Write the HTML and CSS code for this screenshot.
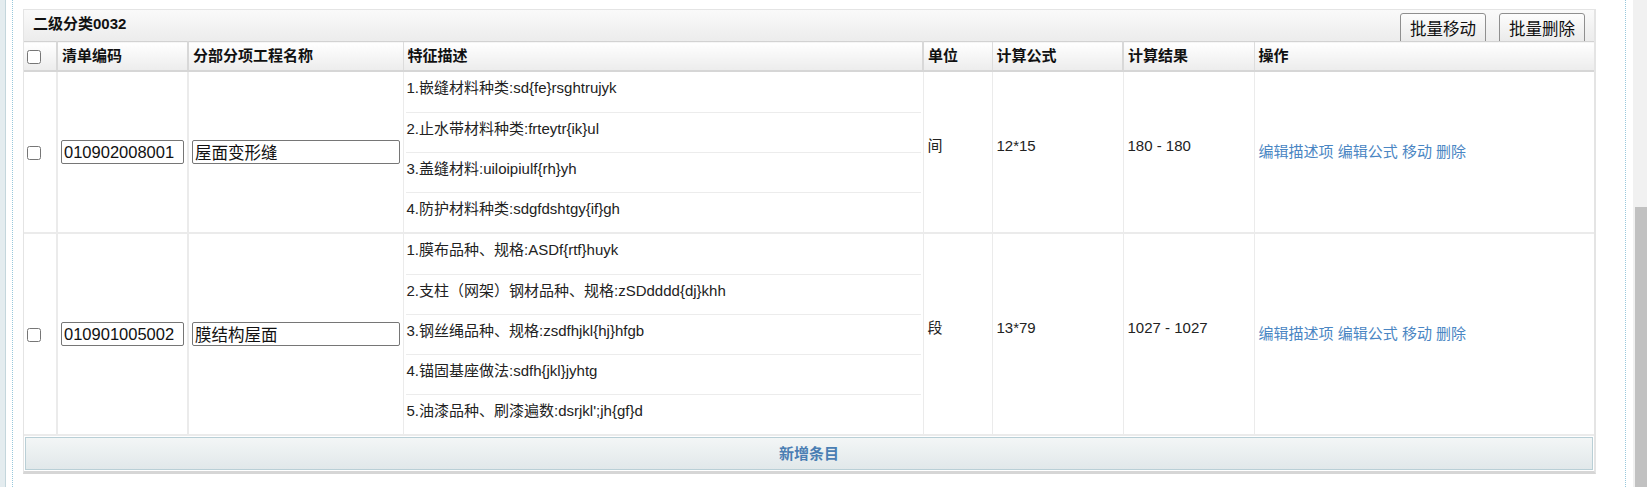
FILE: index.html
```html
<!DOCTYPE html>
<html lang="zh-CN">
<head>
<meta charset="utf-8">
<title>二级分类0032</title>
<link rel="stylesheet" href="styles.css">
</head>
<body>
<div class="page">
  <div class="leftbar"></div>
  <div class="frame">
    <div class="panel">
      <div class="titlebar">
        <span class="title">二级分类0032</span>
        <div class="actions">
          <button class="btn" type="button">批量移动</button>
          <button class="btn" type="button">批量删除</button>
        </div>
      </div>
      <table class="grid">
        <colgroup>
          <col class="c-check">
          <col class="c-code">
          <col class="c-name">
          <col class="c-desc">
          <col class="c-unit">
          <col class="c-formula">
          <col class="c-result">
          <col class="c-ops">
        </colgroup>
        <thead>
          <tr>
            <th class="th-check"><input type="checkbox" class="chk"></th>
            <th class="th-sep">清单编码</th>
            <th class="th-sep">分部分项工程名称</th>
            <th>特征描述</th>
            <th class="th-sep">单位</th>
            <th>计算公式</th>
            <th class="th-sep">计算结果</th>
            <th>操作</th>
          </tr>
        </thead>
        <tbody>
          <tr>
            <td class="td-check"><input type="checkbox" class="chk"></td>
            <td class="td-input"><input class="field field-code" type="text" value="010902008001"></td>
            <td class="td-input"><input class="field field-name" type="text" value="屋面变形缝"></td>
            <td class="td-desc">
              <div class="desc-line">1.嵌缝材料种类:sd{fe}rsghtrujyk</div>
              <div class="desc-line">2.止水带材料种类:frteytr{ik}ul</div>
              <div class="desc-line">3.盖缝材料:uiloipiulf{rh}yh</div>
              <div class="desc-line">4.防护材料种类:sdgfdshtgy{if}gh</div>
            </td>
            <td class="td-text">间</td>
            <td class="td-text">12*15</td>
            <td class="td-text">180 - 180</td>
            <td class="td-ops"><a href="#">编辑描述项</a> <a href="#">编辑公式</a> <a href="#">移动</a> <a href="#">删除</a></td>
          </tr>
          <tr>
            <td class="td-check"><input type="checkbox" class="chk"></td>
            <td class="td-input"><input class="field field-code" type="text" value="010901005002"></td>
            <td class="td-input"><input class="field field-name" type="text" value="膜结构屋面"></td>
            <td class="td-desc">
              <div class="desc-line">1.膜布品种、规格:ASDf{rtf}huyk</div>
              <div class="desc-line">2.支柱（网架）钢材品种、规格:zSDdddd{dj}khh</div>
              <div class="desc-line">3.钢丝绳品种、规格:zsdfhjkl{hj}hfgb</div>
              <div class="desc-line">4.锚固基座做法:sdfh{jkl}jyhtg</div>
              <div class="desc-line">5.油漆品种、刷漆遍数:dsrjkl';jh{gf}d</div>
            </td>
            <td class="td-text">段</td>
            <td class="td-text">13*79</td>
            <td class="td-text">1027 - 1027</td>
            <td class="td-ops"><a href="#">编辑描述项</a> <a href="#">编辑公式</a> <a href="#">移动</a> <a href="#">删除</a></td>
          </tr>
        </tbody>
      </table>
      <div class="addrow"><span class="addlink">新增条目</span></div>
    </div>
  </div>
  <div class="scrollbar"><div class="thumb"></div></div>
</div>
</body>
</html>
```

FILE: styles.css
```css
html, body {
  margin: 0;
  padding: 0;
  background: #ffffff;
}

body {
  font-family: "Liberation Sans", "Noto Sans CJK SC", sans-serif;
  font-size: 15px;
  color: #222222;
}

.page {
  display: flex;
  height: 487px;
  overflow: hidden;
}

.leftbar {
  width: 5px;
  flex: none;
  background: #e4ecef;
  border-right: 1px solid #c4d6dc;
}

.frame {
  flex: none;
  margin-left: 6px;
  padding: 9px 29px 0 10px;
  border-left: 1px dotted #98c8dc;
  border-right: 1px dotted #98c8dc;
}

.panel {
  width: 1573px;
  box-sizing: border-box;
  border: 1px solid #e4e4e4;
  border-bottom: 3px solid #d6d6d6;
  border-right-width: 2px;
  background: #ffffff;
}

.titlebar {
  display: flex;
  justify-content: space-between;
  align-items: flex-end;
  height: 31px;
  overflow: hidden;
  padding: 0 9px 0 9px;
  background: linear-gradient(#fafafa, #ececec);
}

.title {
  align-self: center;
  margin-bottom: 3px;
  font-weight: bold;
  font-size: 15px;
  line-height: 18px;
  color: #111111;
}

.actions {
  display: flex;
  gap: 13px;
}

.btn {
  height: 31px;
  margin-bottom: -3px;
  padding: 0 9px;
  border: 1px solid #8f8f8f;
  border-radius: 3px;
  background: linear-gradient(#fdfdfd, #e9e9e9);
  font-family: "Liberation Sans", "Noto Sans CJK SC", sans-serif;
  font-size: 16.5px;
  line-height: 20px;
  color: #111111;
}

.grid {
  width: 100%;
  border-collapse: collapse;
  table-layout: fixed;
}

.c-check { width: 33px; }
.c-code { width: 131px; }
.c-name { width: 215px; }
.c-desc { width: 520px; }
.c-unit { width: 69px; }
.c-formula { width: 131px; }
.c-result { width: 131px; }

.grid th {
  height: 28px;
  padding: 0 4px;
  text-align: left;
  font-weight: bold;
  font-size: 15px;
  line-height: 18px;
  color: #111111;
  background: linear-gradient(#ffffff, #ececec);
  border-top: 1px solid #d2d2d2;
  border-bottom: 2px solid #d6d6d6;
  border-left: 1px solid #dcdcdc;
}

.grid th.th-sep {
  border-left: 2px solid #d8d8d8;
}

.grid th.th-check {
  border-left: none;
  padding: 0;
}

.chk {
  width: 14px;
  height: 14px;
  margin: 0 0 0 3px;
  vertical-align: middle;
}

.grid td {
  padding: 0 4px;
  border-bottom: 2px solid #ebebeb;
  border-left: 1px solid #ebebeb;
  vertical-align: middle;
  line-height: 18px;
}

.grid td.td-check {
  border-left: none;
  padding: 0;
}

.grid td.td-input {
  padding: 0 3px 0 3px;
  border-left-width: 2px;
}

.field {
  box-sizing: border-box;
  height: 24px;
  margin: 0;
  padding: 0 2px;
  border: 1px solid #767676;
  border-radius: 2px;
  font-family: "Liberation Sans", "Noto Sans CJK SC", sans-serif;
  font-size: 16.5px;
  color: #111111;
  background: #ffffff;
  display: block;
}

.field-code { width: 123px; }
.field-name { width: 208px; }

.grid td.td-desc {
  padding: 0;
  vertical-align: top;
}

.desc-line {
  height: 40px;
  box-sizing: border-box;
  margin: 0 2px;
  padding: 7px 1px 0 1px;
  line-height: 18px;
  white-space: nowrap;
}

.desc-line + .desc-line {
  border-top: 1px solid #ececec;
}

.grid td.td-text {
  padding-bottom: 12px;
}

.grid td.td-ops a {
  color: #4a86c3;
  text-decoration: none;
}

.addrow {
  margin: 1px;
  height: 31px;
  border: 1px solid #b9cfd6;
  background: linear-gradient(#f3f6f6, #e1e8ea);
  display: flex;
  align-items: center;
  justify-content: center;
}

.addlink {
  font-weight: bold;
  font-size: 15px;
  line-height: 18px;
  color: #4a7eb3;
}

.scrollbar {
  flex: none;
  margin-left: 7px;
  width: 14px;
  background: #f1f1f1;
  padding-top: 207px;
  padding-left: 2px;
  box-sizing: border-box;
}

.thumb {
  height: 100%;
  background: #c1c1c1;
}
```
